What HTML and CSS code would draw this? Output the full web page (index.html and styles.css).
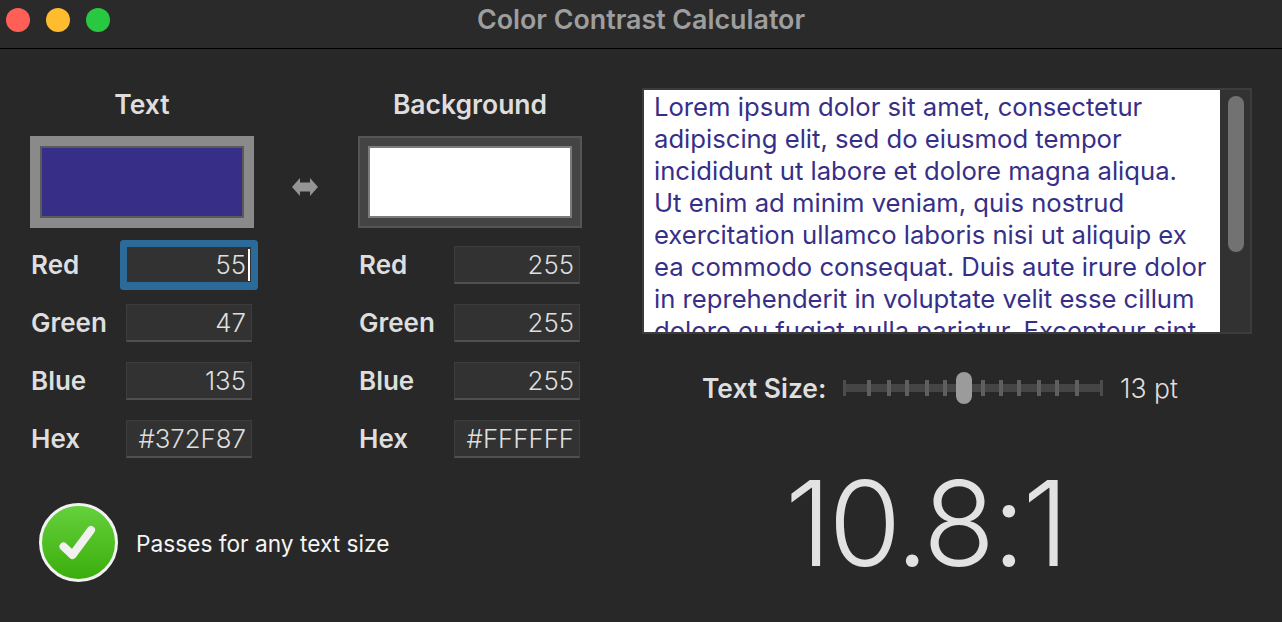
FILE: index.html
```html
<!DOCTYPE html>
<html lang="en">
<head>
<meta charset="utf-8">
<title>Color Contrast Calculator</title>
<link rel="stylesheet" href="styles.css">
</head>
<body>
<div class="window">
  <header class="titlebar">
    <div class="lights">
      <span class="light red"></span>
      <span class="light yellow"></span>
      <span class="light green"></span>
    </div>
    <div class="title">Color Contrast Calculator</div>
  </header>
  <main class="content">
    <section class="left">
      <div class="colors">
        <div class="color-col">
          <div class="heading">Text</div>
          <div class="well well-active"><div class="swatch swatch-text"></div></div>
          <div class="fields">
            <div class="row"><span class="label">Red</span><span class="field focused">55<i class="caret"></i></span></div>
            <div class="row"><span class="label">Green</span><span class="field">47</span></div>
            <div class="row"><span class="label">Blue</span><span class="field">135</span></div>
            <div class="row"><span class="label">Hex</span><span class="field">#372F87</span></div>
          </div>
        </div>
        <div class="swap">
          <svg width="26" height="18" viewBox="0 0 26 18"><path d="M0 9 8 0V4.500H18V0L26 9 18 18V13.500H8V18Z" fill="#949494"/></svg>
        </div>
        <div class="color-col">
          <div class="heading">Background</div>
          <div class="well"><div class="swatch swatch-bg"></div></div>
          <div class="fields">
            <div class="row"><span class="label">Red</span><span class="field">255</span></div>
            <div class="row"><span class="label">Green</span><span class="field">255</span></div>
            <div class="row"><span class="label">Blue</span><span class="field">255</span></div>
            <div class="row"><span class="label">Hex</span><span class="field">#FFFFFF</span></div>
          </div>
        </div>
      </div>
      <div class="status">
        <svg class="check" width="80" height="80" viewBox="0 0 80 80">
          <defs>
            <linearGradient id="g" x1="0" y1="0" x2="0" y2="1">
              <stop offset="0" stop-color="#66d13e"/>
              <stop offset="1" stop-color="#3aad0a"/>
            </linearGradient>
          </defs>
          <circle cx="39.500" cy="39.500" r="38" fill="url(#g)" stroke="#f2f2f2" stroke-width="3"/>
          <path d="M24.500 43.500 33.500 52 52 27" fill="none" stroke="#f1f1f1" stroke-width="8" stroke-linecap="round" stroke-linejoin="round"/>
        </svg>
        <span class="status-text">Passes for any text size</span>
      </div>
    </section>
    <section class="right">
      <div class="preview">
        <div class="sample">Lorem ipsum dolor sit amet, consectetur adipiscing elit, sed do eiusmod tempor incididunt ut labore et dolore magna aliqua. Ut enim ad minim veniam, quis nostrud exercitation ullamco laboris nisi ut aliquip ex ea commodo consequat. Duis aute irure dolor in reprehenderit in voluptate velit esse cillum dolore eu fugiat nulla pariatur. Excepteur sint occaecat cupidatat non proident.</div>
        <div class="scrollbar"><div class="thumb"></div></div>
      </div>
      <div class="size-row">
        <span class="size-label">Text Size:</span>
        <svg class="slider" width="264" height="32" viewBox="0 0 264 32">
          <rect x="2" y="12" width="260" height="8" fill="#454545"/>
          <g fill="#5f5f5f">
            <rect x="2" y="8" width="3" height="16" fill="#4c4c4c"/>
            <rect x="26" y="8" width="4" height="16"/>
            <rect x="46" y="8" width="4" height="16"/>
            <rect x="64" y="8" width="4" height="16"/>
            <rect x="84" y="8" width="4" height="16"/>
            <rect x="102" y="8" width="4" height="16"/>
            <rect x="140" y="8" width="4" height="16"/>
            <rect x="158" y="8" width="4" height="16"/>
            <rect x="176" y="8" width="4" height="16"/>
            <rect x="196" y="8" width="4" height="16"/>
            <rect x="214" y="8" width="4" height="16"/>
            <rect x="234" y="8" width="4" height="16"/>
            <rect x="259" y="8" width="3" height="16" fill="#4c4c4c"/>
          </g>
          <rect x="115" y="0" width="16" height="32" rx="8" fill="#9b9b9b"/>
        </svg>
        <span class="size-value">13 pt</span>
      </div>
      <div class="ratio">10.8:1</div>
    </section>
  </main>
</div>
</body>
</html>
```
FILE: styles.css
```css
* { box-sizing: border-box; }
html, body { margin: 0; height: 100%; background: #282828; overflow: hidden; }
body { font-family: Inter, "Liberation Sans", sans-serif; color: #dedede; }
.window { width: 1282px; height: 622px; display: flex; flex-direction: column; }
.titlebar { height: 49px; flex: none; position: relative; display: flex; align-items: center; justify-content: center; background: #2a2a2a; border-bottom: 1px solid #000; padding-bottom: 10px; }
.lights { position: absolute; left: 6px; top: 8px; display: flex; gap: 16px; }
.light { width: 24px; height: 24px; border-radius: 50%; display: block; }
.red { background: #ff5f57; }
.yellow { background: #febc2e; }
.green { background: #28c840; }
.title { font-size: 26.800px; font-weight: 600; color: #9e9e9e; }
.content { flex: 1; display: flex; padding: 39px 0 0 30px; gap: 60px; }
.left { width: 552px; flex: none; display: flex; flex-direction: column; }
.colors { display: flex; }
.color-col { width: 224px; flex: none; }
.heading { height: 34px; line-height: 32px; margin-bottom: 14px; text-align: center; font-size: 26.500px; font-weight: 600; color: #dedede; }
.well { height: 92px; padding: 8px; background: #444; border: 2px solid #555; }
.well-active { background: #8a8a8a; border-color: #8a8a8a; }
.swatch { height: 100%; border: 2px solid #5a5a5a; }
.swatch-text { background: #372f87; }
.swatch-bg { background: #fff; border-color: #7c7c7c; }
.fields { display: flex; flex-direction: column; gap: 20px; margin-top: 18px; }
.row { display: flex; align-items: center; width: 222px; height: 38px; justify-content: space-between; }
.label { font-size: 26px; font-weight: 600; padding: 0 0 2px 1px; }
.field { width: 126px; height: 38px; display: flex; align-items: center; justify-content: flex-end; padding-right: 5px; font-size: 25.800px; font-weight: 300; background: #323232; border: 1px solid #3d3d3d; border-bottom: 2px solid #505050; color: #dedede; }
.field.focused { box-shadow: 0 0 0 6px #2b6a99; border-radius: 1px; position: relative; border-color: #2b6a99; }
.caret { position: absolute; right: 1px; top: 2px; width: 2px; height: 32px; background: #fff; }
.swap { width: 104px; flex: none; display: flex; justify-content: center; padding-top: 90px; padding-right: 2px; }
.swap svg { display: block; }
.status { display: flex; align-items: center; gap: 17px; margin-top: 45px; padding-left: 9px; }
.check { display: block; flex: none; }
.status-text { font-size: 22.700px; font-weight: 400; color: #f4f4f4; padding-top: 1px; }
.right { width: 610px; flex: none; display: flex; flex-direction: column; }
.preview { height: 246px; display: flex; border: 2px solid #3c3c3c; }
.sample { width: 576px; padding: 1px 10px 0; background: #fff; color: #372f87; font-size: 25.650px; line-height: 32px; overflow: hidden; }
.scrollbar { flex: 1; background: #323232; padding: 6px 6px 0 8px; }
.thumb { height: 156px; border-radius: 8px; background: #727272; }
.size-row { display: flex; align-items: center; height: 32px; margin-top: 38px; padding-left: 60px; }
.size-label { width: 139px; font-size: 26.400px; font-weight: 600; white-space: nowrap; }
.slider { display: block; flex: none; }
.size-value { margin-left: 15px; font-size: 26.500px; font-weight: 300; white-space: nowrap; }
.ratio { margin-top: 54px; padding-right: 43px; text-align: center; font-size: 118px; line-height: 130px; font-weight: 300; color: #e2e2e2; white-space: nowrap; letter-spacing: -3px; }
```
